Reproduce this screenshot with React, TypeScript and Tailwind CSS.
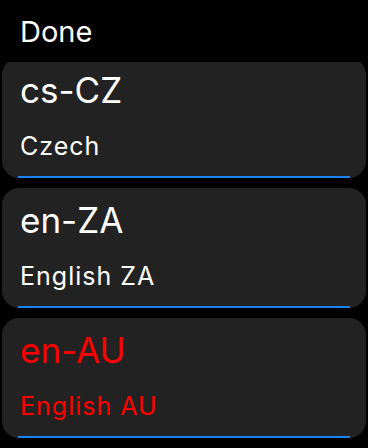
const items = [
  { code: "cs-CZ", name: "Czech", active: false },
  { code: "en-ZA", name: "English ZA", active: false },
  { code: "en-AU", name: "English AU", active: true },
];

export default function App() {
  return (
    <div className="w-[368px] h-[448px] bg-black overflow-hidden" style={{ fontFamily: "Inter, Roboto, sans-serif" }}>
      {/* Header */}
      <div className="h-[62px] px-[20px] pt-[14px]">
        <span className="text-white text-[29px] leading-[36px]">Done</span>
      </div>

      {/* List */}
      <div className="h-[386px] overflow-hidden px-[2px]">
        <div className="flex flex-col gap-[10px] -mt-[4px]">
          {items.map((it) => (
            <div
              key={it.code}
              className="h-[120px] bg-[#222222] rounded-[17px] flex flex-col px-[16px]"
            >
              <div
                className={`pt-[10px] pl-[2px] text-[35px] leading-[44px] ${it.active ? "text-[#ff0000]" : "text-white"}`}
              >
                {it.code}
              </div>
              <div
                className={`mt-[19px] pl-[2px] text-[25px] leading-[30px] tracking-[1px] ${it.active ? "text-[#ff0000]" : "text-white"}`}
              >
                {it.name}
              </div>
              <div className="mt-auto h-[2px] bg-[#1a84f2]" />
            </div>
          ))}
        </div>
      </div>
    </div>
  );
}
